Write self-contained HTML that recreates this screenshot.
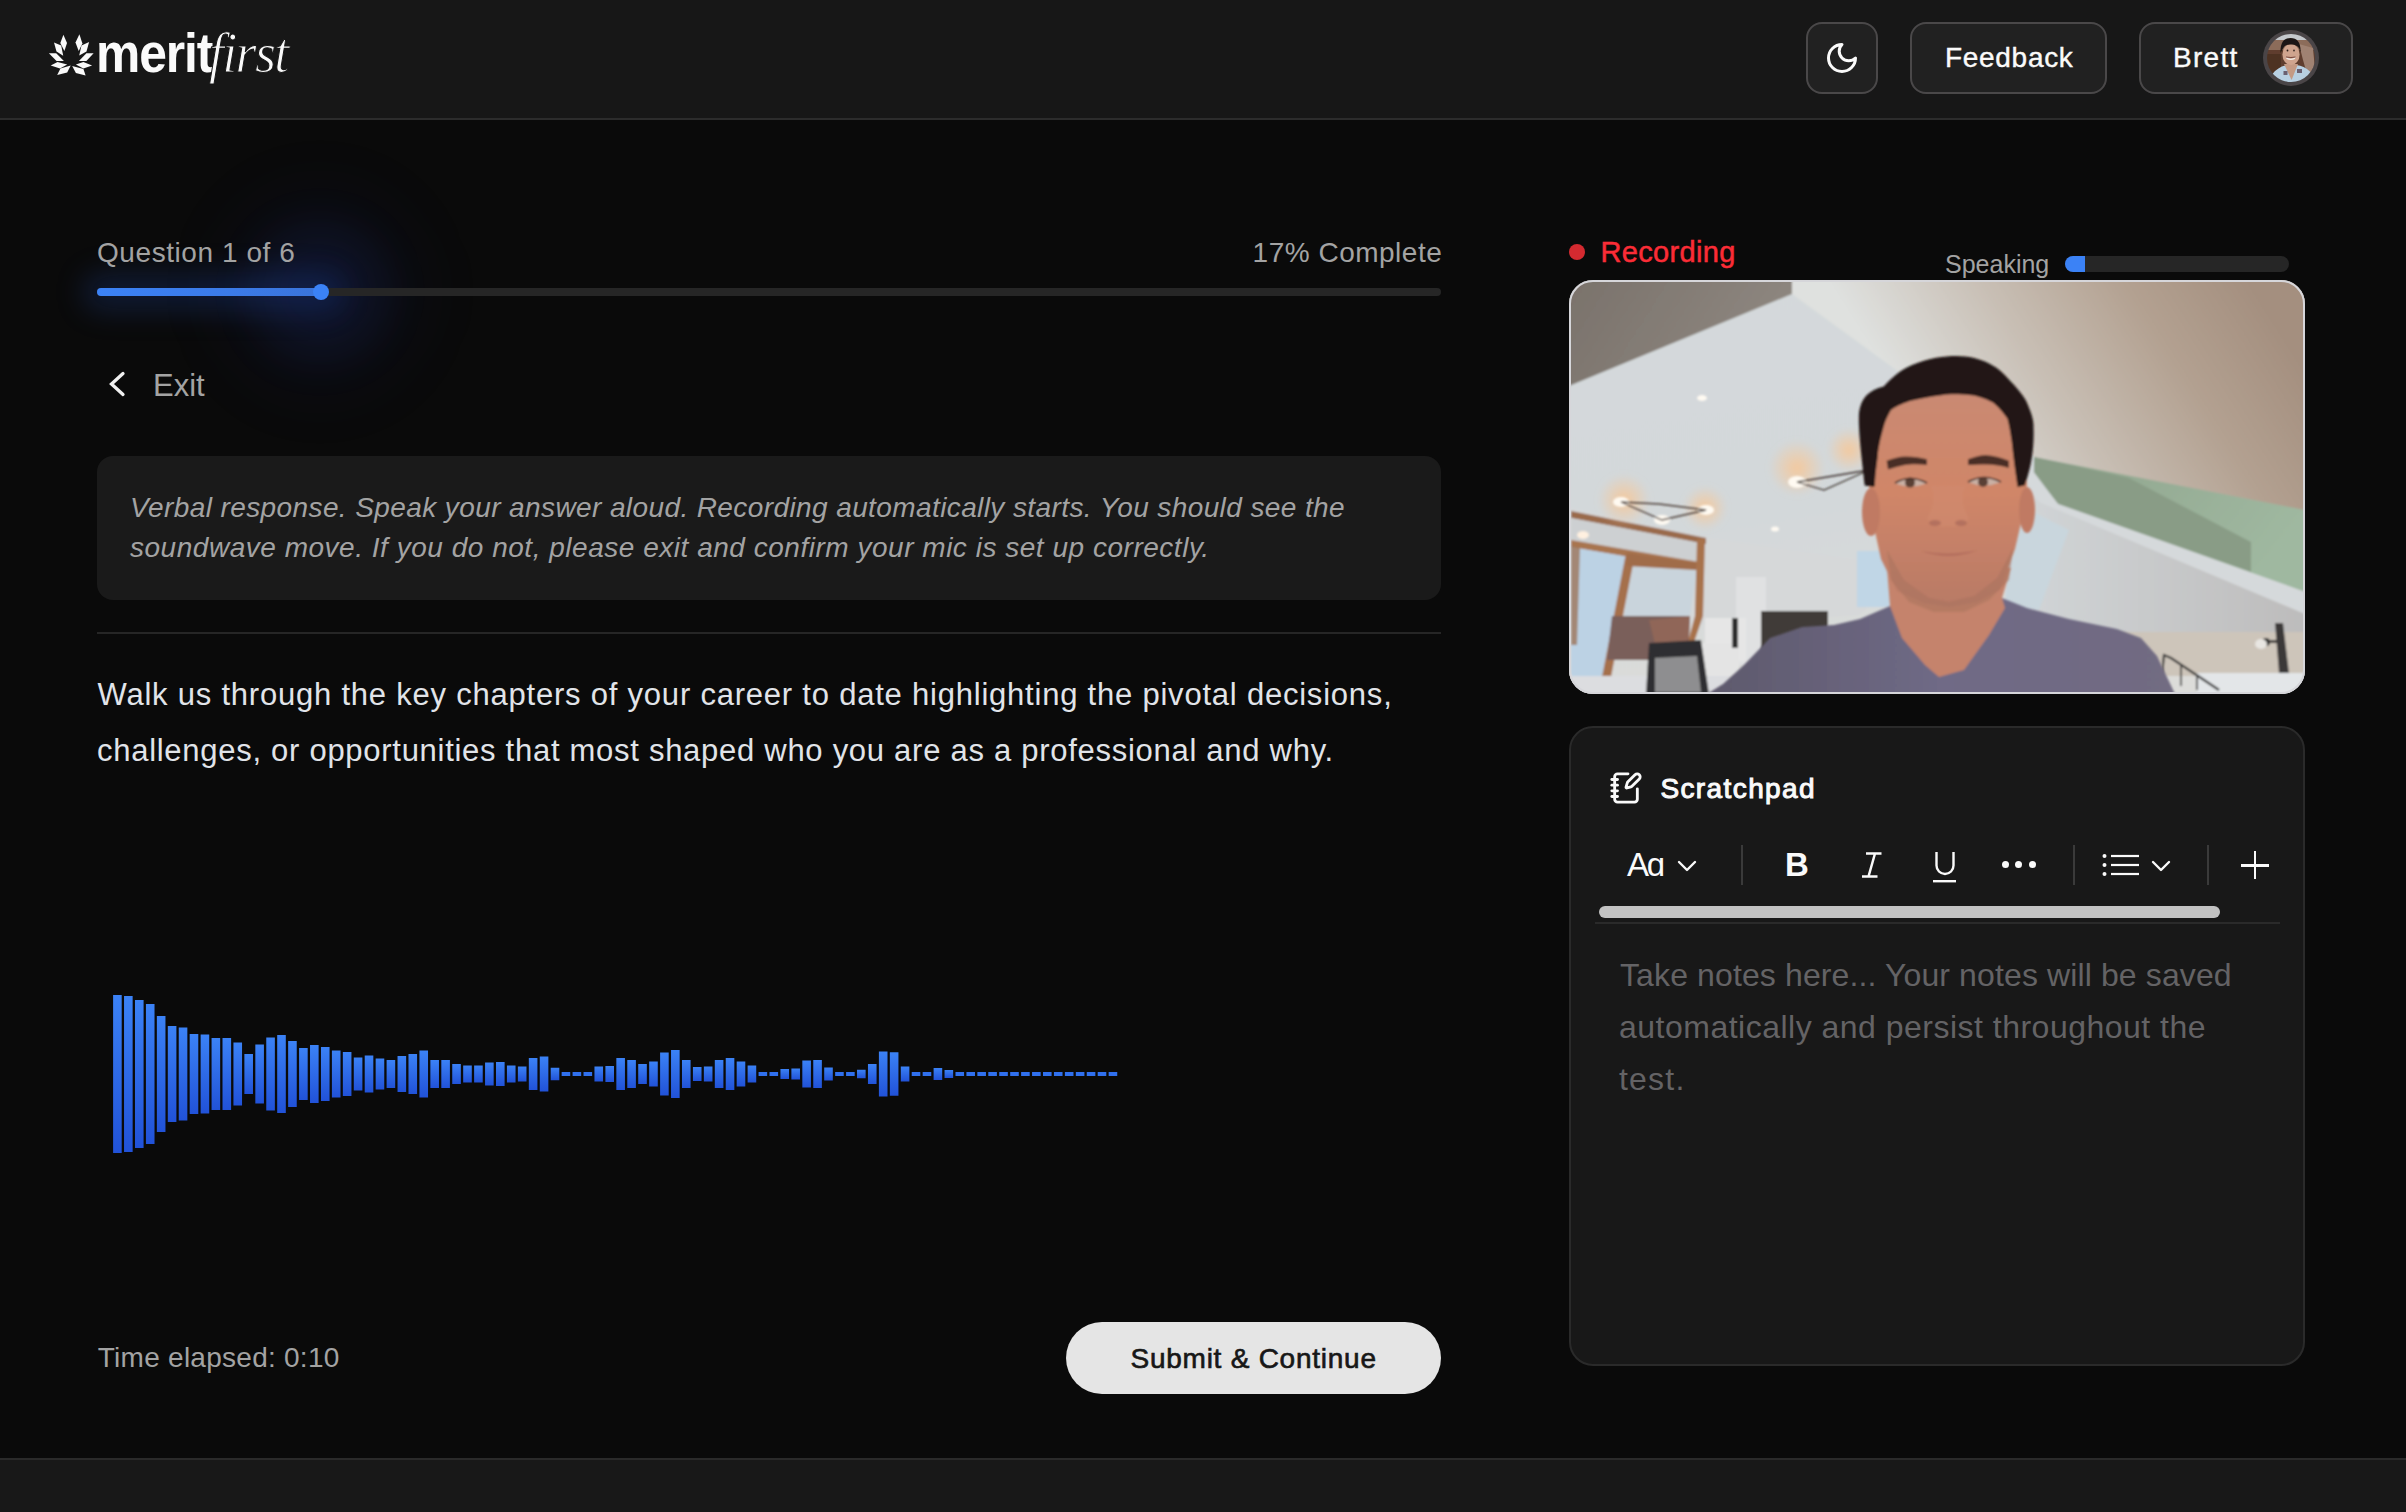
<!DOCTYPE html><html><head><meta charset="utf-8"><style>html,body{margin:0;padding:0;width:2406px;height:1512px;overflow:hidden;background:#0a0a0a;position:relative}</style></head><body><div style="position:absolute;left:0px;top:0px;width:2406px;height:118px;background:#171717"></div>
<div style="position:absolute;left:0px;top:118px;width:2406px;height:2px;background:#2c2c2c"></div>
<div style="position:absolute;left:0px;top:1458px;width:2406px;height:2px;background:#2a2a2a"></div>
<div style="position:absolute;left:0px;top:1460px;width:2406px;height:52px;background:#181818"></div>
<svg style="position:absolute;left:0;top:0" width="120" height="100" viewBox="0 0 120 100"><polygon fill="#fafafa" points="63.4,34.7 67.0,43.0 64.4,50.9 60.3,43.0"/><polygon fill="#fafafa" points="79.4,34.2 82.4,43.5 78.7,50.9 75.5,42.5"/><polygon fill="#fafafa" points="54.0,42.5 61.2,45.6 63.2,55.7 56.5,51.5"/><polygon fill="#fafafa" points="89.1,42.0 86.5,51.5 79.2,55.4 81.5,45.5"/><polygon fill="#fafafa" points="48.9,53.2 56.2,53.2 63.9,60.9 56.5,60.9"/><polygon fill="#fafafa" points="93.6,53.2 86.4,53.2 78.9,60.9 86.4,60.9"/><polygon fill="#fafafa" points="50.7,65.6 57.5,61.9 67.2,64.4 60.0,68.4"/><polygon fill="#fafafa" points="92.1,65.4 83.4,61.9 75.9,64.4 83.4,68.4"/><polygon fill="#fafafa" points="57.2,74.9 60.4,68.4 70.7,65.6 67.2,72.4"/><polygon fill="#fafafa" points="85.6,75.6 75.9,72.9 72.2,65.9 83.4,68.9"/></svg>
<div style="position:absolute;left:95.90px;top:25.84px;font-family:'Liberation Sans', sans-serif;font-size:55px;line-height:55px;font-weight:700;font-style:normal;letter-spacing:-1.2px;color:#fafafa;white-space:nowrap;transform:scaleX(0.905);transform-origin:0 0">merit</div>
<div style="position:absolute;left:209.00px;top:23.83px;font-family:'Liberation Serif', serif;font-size:58px;line-height:58px;font-weight:400;font-style:italic;letter-spacing:-1.8px;color:#fafafa;white-space:nowrap;-webkit-text-stroke:1.1px #171717;transform:scaleX(0.93);transform-origin:0 0">first</div>
<div style="position:absolute;left:1806px;top:22px;width:72px;height:72px;background:#212121;border:2px solid #4a4849;box-sizing:border-box;border-radius:16px"></div>
<svg style="position:absolute;left:1824px;top:40px" width="36" height="36" viewBox="0 0 24 24" fill="none" stroke="#fafafa" stroke-width="2" stroke-linecap="round" stroke-linejoin="round"><path d="M12 3a6 6 0 0 0 9 9 9 9 0 1 1-9-9Z"/></svg>
<div style="position:absolute;left:1910px;top:22px;width:197px;height:72px;background:#212121;border:2px solid #4a4849;box-sizing:border-box;border-radius:16px"></div>
<div style="position:absolute;left:1945.00px;top:44.30px;font-family:'Liberation Sans', sans-serif;font-size:28px;line-height:28px;font-weight:400;font-style:normal;letter-spacing:0.7px;color:#fafafa;white-space:nowrap;-webkit-text-stroke:0.4px #fafafa">Feedback</div>
<div style="position:absolute;left:2139px;top:22px;width:214px;height:72px;background:#212121;border:2px solid #4a4849;box-sizing:border-box;border-radius:16px"></div>
<div style="position:absolute;left:2173.00px;top:44.30px;font-family:'Liberation Sans', sans-serif;font-size:28px;line-height:28px;font-weight:400;font-style:normal;letter-spacing:1.3px;color:#fafafa;white-space:nowrap;-webkit-text-stroke:0.4px #fafafa">Brett</div>
<div style="position:absolute;left:2263px;top:30px;width:56px;height:56px;border-radius:50%;background:#4a4547;overflow:hidden">
<svg width="56" height="56" viewBox="0 0 56 56" style="position:absolute;left:0;top:0">
<defs><clipPath id="avc"><circle cx="28" cy="28" r="24"/></clipPath><filter id="avb"><feGaussianBlur stdDeviation="0.5"/></filter></defs>
<g clip-path="url(#avc)" filter="url(#avb)">
<rect x="0" y="0" width="56" height="56" fill="#5e3e2e"/>
<rect x="0" y="0" width="56" height="20" fill="#8c6c5a"/>
<rect x="10" y="0" width="36" height="10" fill="#c4c8cc"/>
<polygon points="36,14 50,18 52,40 44,44 40,30" fill="#a08272"/>
<rect x="4" y="24" width="14" height="22" fill="#4e3022"/>
<path d="M6 48 L12 41 Q20 34 27 35 Q36 34 44 39 L52 46 L52 56 L6 56 Z" fill="#b8d0e2"/>
<path d="M21 34 L28.6 50 L35 34 Z" fill="#c49a84"/>
<rect x="20.5" y="41" width="4" height="4" fill="#6a6070"/>
<rect x="34" y="39" width="5" height="4" fill="#6a6070"/>
<ellipse cx="28" cy="24.5" rx="8.6" ry="10.5" fill="#cfa48e"/>
<path d="M17.5 23 Q17 8 27.5 8 Q38 8 37.5 22 L36 18 Q33 14 28 14.5 Q22 14 20 18.5 Z" fill="#1e1612"/>
<path d="M23 27 Q28 30.5 32.5 27 L32 29 Q28 31 23.5 29 Z" fill="#f2ede8"/>
<path d="M23 27 Q28 28 32.5 27" stroke="#5a2a22" stroke-width="0.8" fill="none"/>
<circle cx="24.5" cy="20.5" r="0.9" fill="#2a1a14"/>
<circle cx="31" cy="20.5" r="0.9" fill="#3a2a24"/>
</g></svg></div>
<div style="position:absolute;left:215px;top:187px;width:210px;height:210px;border-radius:50%;background:rgba(30,60,190,0.05);filter:blur(30px)"></div>
<div style="position:absolute;left:255px;top:227px;width:130px;height:130px;border-radius:50%;background:rgba(35,80,220,0.10);filter:blur(22px)"></div>
<div style="position:absolute;left:82px;top:272px;width:262px;height:40px;border-radius:20px;background:rgba(40,100,240,0.17);filter:blur(14px)"></div>
<div style="position:absolute;left:97.00px;top:238.60px;font-family:'Liberation Sans', sans-serif;font-size:28px;line-height:28px;font-weight:400;font-style:normal;letter-spacing:0.57px;color:#a3a3a3;white-space:nowrap;">Question 1 of 6</div>
<div style="position:absolute;left:1252.60px;top:238.80px;font-family:'Liberation Sans', sans-serif;font-size:28px;line-height:28px;font-weight:400;font-style:normal;letter-spacing:0.5px;color:#a3a3a3;white-space:nowrap;">17% Complete</div>
<div style="position:absolute;left:97px;top:288px;width:1344px;height:8px;background:#262626;border-radius:4px"></div>
<div style="position:absolute;left:97px;top:288px;width:226px;height:8px;background:linear-gradient(90deg,#3b82f6,#3b7be8 60%,#3a74da);border-radius:4px 0 0 4px"></div>
<div style="position:absolute;left:313px;top:284px;width:16px;height:16px;background:#3b82f6;border-radius:50%"></div>
<svg style="position:absolute;left:100px;top:366px" width="36" height="36" viewBox="0 0 36 36" fill="none" stroke="#f0f0f0" stroke-width="3.3" stroke-linecap="round" stroke-linejoin="miter"><path d="M23 7.5 L11.5 18 L23 28.5"/></svg>
<div style="position:absolute;left:153.00px;top:370.16px;font-family:'Liberation Sans', sans-serif;font-size:31px;line-height:31px;font-weight:400;font-style:normal;letter-spacing:0px;color:#a3a3a3;white-space:nowrap;">Exit</div>
<div style="position:absolute;left:97px;top:456px;width:1344px;height:144px;background:#1a1a1a;border-radius:16px"></div>
<div style="position:absolute;left:130.00px;top:494.20px;font-family:'Liberation Sans', sans-serif;font-size:28px;line-height:28px;font-weight:400;font-style:italic;letter-spacing:0.4px;color:#a3a3a3;white-space:nowrap;">Verbal response. Speak your answer aloud. Recording automatically starts. You should see the</div>
<div style="position:absolute;left:130.00px;top:534.10px;font-family:'Liberation Sans', sans-serif;font-size:28px;line-height:28px;font-weight:400;font-style:italic;letter-spacing:0.52px;color:#a3a3a3;white-space:nowrap;">soundwave move. If you do not, please exit and confirm your mic is set up correctly.</div>
<div style="position:absolute;left:97px;top:632px;width:1344px;height:2px;background:#262626"></div>
<div style="position:absolute;left:97.50px;top:679.06px;font-family:'Liberation Sans', sans-serif;font-size:31px;line-height:31px;font-weight:400;font-style:normal;letter-spacing:0.78px;color:#e1e4e9;white-space:nowrap;">Walk us through the key chapters of your career to date highlighting the pivotal decisions,</div>
<div style="position:absolute;left:97.00px;top:735.26px;font-family:'Liberation Sans', sans-serif;font-size:31px;line-height:31px;font-weight:400;font-style:normal;letter-spacing:0.72px;color:#e1e4e9;white-space:nowrap;">challenges, or opportunities that most shaped who you are as a professional and why.</div>
<svg style="position:absolute;left:0;top:0" width="1200" height="1200" viewBox="0 0 1200 1200"><defs><linearGradient id="bg" x1="0" y1="0" x2="0" y2="1"><stop offset="0" stop-color="#3b82f6"/><stop offset="1" stop-color="#2152d8"/></linearGradient></defs><rect x="113.10" y="995.00" width="8.6" height="158.0" fill="url(#bg)"/><rect x="124.04" y="996.00" width="8.6" height="156.0" fill="url(#bg)"/><rect x="134.98" y="1000.00" width="8.6" height="148.0" fill="url(#bg)"/><rect x="145.92" y="1004.00" width="8.6" height="140.0" fill="url(#bg)"/><rect x="156.86" y="1016.00" width="8.6" height="116.0" fill="url(#bg)"/><rect x="167.80" y="1026.00" width="8.6" height="96.0" fill="url(#bg)"/><rect x="178.74" y="1027.50" width="8.6" height="93.0" fill="url(#bg)"/><rect x="189.68" y="1034.00" width="8.6" height="80.0" fill="url(#bg)"/><rect x="200.62" y="1034.50" width="8.6" height="79.0" fill="url(#bg)"/><rect x="211.56" y="1038.00" width="8.6" height="72.0" fill="url(#bg)"/><rect x="222.50" y="1038.00" width="8.6" height="72.0" fill="url(#bg)"/><rect x="233.44" y="1042.50" width="8.6" height="63.0" fill="url(#bg)"/><rect x="244.38" y="1054.00" width="8.6" height="40.0" fill="url(#bg)"/><rect x="255.32" y="1044.50" width="8.6" height="59.0" fill="url(#bg)"/><rect x="266.26" y="1037.50" width="8.6" height="73.0" fill="url(#bg)"/><rect x="277.20" y="1035.00" width="8.6" height="78.0" fill="url(#bg)"/><rect x="288.14" y="1041.00" width="8.6" height="66.0" fill="url(#bg)"/><rect x="299.08" y="1048.00" width="8.6" height="52.0" fill="url(#bg)"/><rect x="310.02" y="1045.00" width="8.6" height="58.0" fill="url(#bg)"/><rect x="320.96" y="1047.00" width="8.6" height="54.0" fill="url(#bg)"/><rect x="331.90" y="1050.50" width="8.6" height="47.0" fill="url(#bg)"/><rect x="342.84" y="1052.00" width="8.6" height="44.0" fill="url(#bg)"/><rect x="353.78" y="1057.50" width="8.6" height="33.0" fill="url(#bg)"/><rect x="364.72" y="1055.50" width="8.6" height="37.0" fill="url(#bg)"/><rect x="375.66" y="1058.50" width="8.6" height="31.0" fill="url(#bg)"/><rect x="386.60" y="1060.00" width="8.6" height="28.0" fill="url(#bg)"/><rect x="397.54" y="1056.00" width="8.6" height="36.0" fill="url(#bg)"/><rect x="408.48" y="1054.00" width="8.6" height="40.0" fill="url(#bg)"/><rect x="419.42" y="1050.50" width="8.6" height="47.0" fill="url(#bg)"/><rect x="430.36" y="1060.00" width="8.6" height="28.0" fill="url(#bg)"/><rect x="441.30" y="1060.00" width="8.6" height="28.0" fill="url(#bg)"/><rect x="452.24" y="1064.00" width="8.6" height="20.0" fill="url(#bg)"/><rect x="463.18" y="1065.50" width="8.6" height="17.0" fill="url(#bg)"/><rect x="474.12" y="1065.50" width="8.6" height="17.0" fill="url(#bg)"/><rect x="485.06" y="1062.50" width="8.6" height="23.0" fill="url(#bg)"/><rect x="496.00" y="1062.00" width="8.6" height="24.0" fill="url(#bg)"/><rect x="506.94" y="1065.50" width="8.6" height="17.0" fill="url(#bg)"/><rect x="517.88" y="1066.50" width="8.6" height="15.0" fill="url(#bg)"/><rect x="528.82" y="1058.00" width="8.6" height="32.0" fill="url(#bg)"/><rect x="539.76" y="1056.50" width="8.6" height="35.0" fill="url(#bg)"/><rect x="550.70" y="1067.75" width="8.6" height="12.5" fill="url(#bg)"/><rect x="561.64" y="1072.00" width="8.6" height="4.0" fill="#3070ee"/><rect x="572.58" y="1072.00" width="8.6" height="4.0" fill="#3070ee"/><rect x="583.52" y="1072.00" width="8.6" height="4.0" fill="#3070ee"/><rect x="594.46" y="1066.50" width="8.6" height="15.0" fill="url(#bg)"/><rect x="605.40" y="1066.00" width="8.6" height="16.0" fill="url(#bg)"/><rect x="616.34" y="1058.00" width="8.6" height="32.0" fill="url(#bg)"/><rect x="627.28" y="1060.00" width="8.6" height="28.0" fill="url(#bg)"/><rect x="638.22" y="1064.00" width="8.6" height="20.0" fill="url(#bg)"/><rect x="649.16" y="1061.50" width="8.6" height="25.0" fill="url(#bg)"/><rect x="660.10" y="1052.50" width="8.6" height="43.0" fill="url(#bg)"/><rect x="671.04" y="1050.00" width="8.6" height="48.0" fill="url(#bg)"/><rect x="681.98" y="1060.00" width="8.6" height="28.0" fill="url(#bg)"/><rect x="692.92" y="1067.00" width="8.6" height="14.0" fill="url(#bg)"/><rect x="703.86" y="1066.50" width="8.6" height="15.0" fill="url(#bg)"/><rect x="714.80" y="1060.00" width="8.6" height="28.0" fill="url(#bg)"/><rect x="725.74" y="1058.00" width="8.6" height="32.0" fill="url(#bg)"/><rect x="736.68" y="1061.50" width="8.6" height="25.0" fill="url(#bg)"/><rect x="747.62" y="1065.50" width="8.6" height="17.0" fill="url(#bg)"/><rect x="758.56" y="1072.00" width="8.6" height="4.0" fill="#3070ee"/><rect x="769.50" y="1072.00" width="8.6" height="4.0" fill="#3070ee"/><rect x="780.44" y="1069.00" width="8.6" height="10.0" fill="url(#bg)"/><rect x="791.38" y="1068.50" width="8.6" height="11.0" fill="url(#bg)"/><rect x="802.32" y="1060.50" width="8.6" height="27.0" fill="url(#bg)"/><rect x="813.26" y="1060.00" width="8.6" height="28.0" fill="url(#bg)"/><rect x="824.20" y="1067.50" width="8.6" height="13.0" fill="url(#bg)"/><rect x="835.14" y="1072.00" width="8.6" height="4.0" fill="#3070ee"/><rect x="846.08" y="1072.00" width="8.6" height="4.0" fill="#3070ee"/><rect x="857.02" y="1069.75" width="8.6" height="8.5" fill="url(#bg)"/><rect x="867.96" y="1064.00" width="8.6" height="20.0" fill="url(#bg)"/><rect x="878.90" y="1051.50" width="8.6" height="45.0" fill="url(#bg)"/><rect x="889.84" y="1052.25" width="8.6" height="43.5" fill="url(#bg)"/><rect x="900.78" y="1066.50" width="8.6" height="15.0" fill="url(#bg)"/><rect x="911.72" y="1072.00" width="8.6" height="4.0" fill="#3070ee"/><rect x="922.66" y="1072.00" width="8.6" height="4.0" fill="#3070ee"/><rect x="933.60" y="1068.00" width="8.6" height="12.0" fill="url(#bg)"/><rect x="944.54" y="1070.00" width="8.6" height="8.0" fill="url(#bg)"/><rect x="955.48" y="1072.00" width="8.6" height="4.0" fill="#3070ee"/><rect x="966.42" y="1072.00" width="8.6" height="4.0" fill="#3070ee"/><rect x="977.36" y="1072.00" width="8.6" height="4.0" fill="#3070ee"/><rect x="988.30" y="1072.00" width="8.6" height="4.0" fill="#3070ee"/><rect x="999.24" y="1072.00" width="8.6" height="4.0" fill="#3070ee"/><rect x="1010.18" y="1072.00" width="8.6" height="4.0" fill="#3070ee"/><rect x="1021.12" y="1072.00" width="8.6" height="4.0" fill="#3070ee"/><rect x="1032.06" y="1072.00" width="8.6" height="4.0" fill="#3070ee"/><rect x="1043.00" y="1072.00" width="8.6" height="4.0" fill="#3070ee"/><rect x="1053.94" y="1072.00" width="8.6" height="4.0" fill="#3070ee"/><rect x="1064.88" y="1072.00" width="8.6" height="4.0" fill="#3070ee"/><rect x="1075.82" y="1072.00" width="8.6" height="4.0" fill="#3070ee"/><rect x="1086.76" y="1072.00" width="8.6" height="4.0" fill="#3070ee"/><rect x="1097.70" y="1072.00" width="8.6" height="4.0" fill="#3070ee"/><rect x="1108.64" y="1072.00" width="8.6" height="4.0" fill="#3070ee"/></svg>
<div style="position:absolute;left:97.80px;top:1344.20px;font-family:'Liberation Sans', sans-serif;font-size:28px;line-height:28px;font-weight:400;font-style:normal;letter-spacing:0.26px;color:#a3a3a3;white-space:nowrap;">Time elapsed: 0:10</div>
<div style="position:absolute;left:1066px;top:1322px;width:375px;height:72px;background:#e5e5e5;border-radius:36px"></div>
<div style="position:absolute;left:1130.50px;top:1344.60px;font-family:'Liberation Sans', sans-serif;font-size:28px;line-height:28px;font-weight:400;font-style:normal;letter-spacing:0.75px;color:#171717;white-space:nowrap;-webkit-text-stroke:0.65px #171717">Submit &amp; Continue</div>
<div style="position:absolute;left:1569px;top:244px;width:16px;height:16px;background:#d42a30;border-radius:50%"></div>
<div style="position:absolute;left:1600.50px;top:238.05px;font-family:'Liberation Sans', sans-serif;font-size:29px;line-height:29px;font-weight:400;font-style:normal;letter-spacing:0.33px;color:#fb2c36;white-space:nowrap;-webkit-text-stroke:0.5px #fb2c36">Recording</div>
<div style="position:absolute;left:1945.00px;top:252.04px;font-family:'Liberation Sans', sans-serif;font-size:25px;line-height:25px;font-weight:400;font-style:normal;letter-spacing:0px;color:#a3a3a3;white-space:nowrap;">Speaking</div>
<div style="position:absolute;left:2065px;top:256px;width:224px;height:16px;background:#262626;border-radius:8px"></div>
<div style="position:absolute;left:2065px;top:256px;width:20px;height:16px;background:#3b82f6;border-radius:8px 0 0 8px"></div>
<div id="video" style="position:absolute;left:1569px;top:280px;width:736px;height:414px;border-radius:24px;overflow:hidden;background:#cfd3d4"><svg width="736" height="414" viewBox="0 0 736 414" style="position:absolute;left:0;top:0">
<defs>
<linearGradient id="vdark" x1="0" y1="0" x2="1" y2="0.3"><stop offset="0" stop-color="#7a726b"/><stop offset="1" stop-color="#8e8780"/></linearGradient>
<linearGradient id="vceil" x1="0" y1="0" x2="0.3" y2="1"><stop offset="0" stop-color="#d4d9db"/><stop offset="0.6" stop-color="#d3d8da"/><stop offset="1" stop-color="#dcdcd9"/></linearGradient>
<linearGradient id="vright" gradientUnits="userSpaceOnUse" x1="380" y1="190" x2="680" y2="0"><stop offset="0" stop-color="#dfe1df"/><stop offset="0.35" stop-color="#c9c0b6"/><stop offset="0.7" stop-color="#b3a191"/><stop offset="1" stop-color="#a48f7f"/></linearGradient>
<linearGradient id="vgreen" x1="0" y1="0" x2="1" y2="0.4"><stop offset="0" stop-color="#8fa38c"/><stop offset="1" stop-color="#9fb8a0"/></linearGradient>
<linearGradient id="vwall" x1="0" y1="0" x2="1" y2="0"><stop offset="0" stop-color="#d2d6d8"/><stop offset="1" stop-color="#bdbcbc"/></linearGradient>
<radialGradient id="vglow"><stop offset="0" stop-color="#f6c89a" stop-opacity="0.95"/><stop offset="1" stop-color="#f6c89a" stop-opacity="0"/></radialGradient>
<radialGradient id="vbulb"><stop offset="0" stop-color="#ffffff"/><stop offset="0.6" stop-color="#fff6e8"/><stop offset="1" stop-color="#fff6e8" stop-opacity="0"/></radialGradient>
<linearGradient id="vskin" x1="0" y1="0" x2="0" y2="1"><stop offset="0" stop-color="#c98a74"/><stop offset="0.5" stop-color="#d08668"/><stop offset="1" stop-color="#b87a66"/></linearGradient>
<linearGradient id="vshirt" x1="0" y1="0" x2="1" y2="0"><stop offset="0" stop-color="#5e596c"/><stop offset="0.5" stop-color="#6f6a86"/><stop offset="1" stop-color="#726c82"/></linearGradient>
<filter id="vblur" x="-5%" y="-5%" width="110%" height="110%"><feGaussianBlur stdDeviation="1.3"/></filter>
<filter id="vblur2" x="-50%" y="-50%" width="200%" height="200%"><feGaussianBlur stdDeviation="3"/></filter>
</defs>
<g filter="url(#vblur)">
<rect x="0" y="0" width="736" height="414" fill="url(#vceil)"/>
<polygon points="0,0 223,0 223,14 0,106" fill="url(#vdark)"/>
<polygon points="223,0 736,0 736,232 465,177 330,92 223,14" fill="url(#vright)"/>

<!-- green band -->
<polygon points="465,177 736,230 736,312 489,224 465,192" fill="url(#vgreen)"/>
<polygon points="465,177 560,198 682,262 682,292 489,224 465,192" fill="#899c86"/>
<!-- white beam -->
<polygon points="462,190 489,224 736,312 736,334 470,222 455,205" fill="#d5d9db"/>
<!-- wall lower right -->
<polygon points="455,205 470,222 736,334 736,354 470,354 440,240" fill="url(#vwall)"/>
<polygon points="440,220 500,250 470,330 436,330" fill="#c9d6dd"/>
<rect x="470" y="352" width="266" height="44" fill="#cdc5ba"/>
<rect x="628" y="393" width="108" height="21" fill="#e3e6e8"/>
<polyline points="593,394 595,375 602,378 650,410" fill="none" stroke="#2e2e2e" stroke-width="2.2"/><line x1="612" y1="386" x2="612" y2="406" stroke="#2e2e2e" stroke-width="1.6"/><line x1="628" y1="396" x2="628" y2="410" stroke="#2e2e2e" stroke-width="1.6"/>
<polygon points="706,343 714,343 720,393 710,393" fill="#3a3838"/><circle cx="697" cy="362" r="4" fill="#2a2a2a"/><ellipse cx="692" cy="364" rx="6" ry="5" fill="#e8e6e2"/><rect x="700" y="360" width="10" height="3" fill="#3a3838"/>
<!-- left office -->
<polygon points="0,228 137,257 300,282 330,300 290,335 137,345 0,345" fill="#d6d8d9"/>
<polygon points="2,231 137,258 137,264 2,238" fill="#9a6a4c"/>
<polygon points="2,238 135,264 130,283 2,261" fill="#cdd0d2"/>
<polygon points="2,260 130,282 129,289 2,267" fill="#a87450"/>
<polygon points="2,267 60,277 40,397 2,397" fill="#bcd2e4"/>
<polygon points="62,286 128,290 121,336 55,336" fill="#c9d4dc"/>
<polygon points="57,273 66,274 42,397 33,397" fill="#a5704c"/>
<polygon points="58,273 128,283 127,290 58,286" fill="#a06c4a"/>
<polygon points="128,259 136,259 134,336 119,380 114,380 126,336" fill="#a8724c"/>
<polygon points="2,266 11,268 8,365 2,365" fill="#9c7458" opacity="0.8"/>
<rect x="167" y="297" width="30" height="88" fill="#e0e1e2"/>
<rect x="288" y="271" width="36" height="56" fill="#c0d6e6"/>
<polygon points="43,336 121,336 119,380 38,380" fill="#7a5e5a"/>
<polygon points="80,340 121,336 119,380 90,380" fill="#9a6a58" opacity="0.7"/>
<rect x="192" y="331" width="67" height="46" fill="#403b39"/>
<rect x="136" y="338" width="41" height="43" fill="#e6e6e6"/>
<rect x="130" y="363" width="40" height="34" fill="#e4e4e4"/>
<rect x="0" y="396" width="160" height="18" fill="#dcdde0"/>
<polygon points="80,363 132,360 140,414 77,414" fill="#2e2e30"/>
<polygon points="86,378 128,376 132,412 86,412" fill="#8e8e90"/>
<rect x="163" y="338" width="6" height="30" fill="#2d2d2d"/>
</g>
<g filter="url(#vblur2)">
<circle cx="55" cy="220" r="26" fill="url(#vglow)"/>
<circle cx="136" cy="228" r="22" fill="url(#vglow)"/>
<circle cx="228" cy="188" r="28" fill="url(#vglow)"/>
<circle cx="280" cy="170" r="22" fill="url(#vglow)"/>
</g>
<g filter="url(#vblur)">
<ellipse cx="52" cy="222" rx="8" ry="5" fill="#fffaf2"/>
<ellipse cx="93" cy="240" rx="8" ry="5" fill="#fffaf2"/>
<ellipse cx="137" cy="230" rx="8" ry="5" fill="#fffaf2"/>
<ellipse cx="228" cy="202" rx="9" ry="6" fill="#fffaf2"/>
<ellipse cx="133" cy="118" rx="5" ry="3" fill="#fffaf2"/>
<ellipse cx="206" cy="249" rx="4" ry="2.5" fill="#fffaf2"/>
<ellipse cx="14" cy="255" rx="6" ry="4" fill="#fff0e0"/>
<polyline points="52,222 93,240 137,230 90,224 52,222" fill="none" stroke="#4a3c36" stroke-width="1.3"/>
<polyline points="228,202 300,190 255,210 228,202" fill="none" stroke="#3a302c" stroke-width="1.3"/>
<!-- person -->
<polygon points="138,414 154,404 175,385 201,358 233,347 265,345 291,339 321,326 345,333 380,352 420,338 433,318 458,328 500,339 548,349 572,358 588,376 606,414" fill="url(#vshirt)"/>
<polygon points="318,288 442,288 433,318 436,328 420,355 395,390 370,397 356,385 333,358 321,326" fill="#c5836c"/>
<polygon points="300,205 305,247 312,279 328,311 355,323 380,327 408,322 431,310 446,269 455,230 458,205 452,140 440,110 380,100 318,110 306,140" fill="url(#vskin)"/>
<polygon points="318,270 335,300 360,318 380,322 405,316 428,298 444,268 440,300 420,320 395,332 365,332 340,322 322,300" fill="#a8725f" opacity="0.55"/>
<ellipse cx="302" cy="232" rx="9" ry="24" fill="#c07a64"/>
<ellipse cx="458" cy="230" rx="8" ry="23" fill="#c07a64"/>
<path d="M304.5,207 L295.7,205.5 C293,180 289,150 290,132.7 C292,118 300,110 314.6,106.6 C325,95 335,88 343.7,84.7 C360,78 375,76 387.4,76 C400,76 410,79 416.5,81.8 C428,87 433,92 438.3,97.8 C448,108 454,115 457.2,121 C462,132 465,140 464.5,147.3 C465,160 464,170 463,176.4 C461,190 458,198 455.8,205.5 L448.5,207 C446,190 444,175 442.7,161.8 C441,150 440,145 438.3,138.6 C432,130 428,126 423.8,122.6 C415,118 408,116 402,115.3 C390,114 380,114 372.8,115.3 C360,117 350,119 341,121 C332,124 326,127 322,130 C318,137 316,142 314.6,147.3 C311,160 309,170 308.8,176.4 C307,190 306,198 306,205.5 Z" fill="#231814"/>
<path d="M317.6,180.8 C325,178 330,176.5 336.5,176.4 C345,176.5 352,177.5 358,179.3 L358,185 C350,184 342,184 336,185 C330,186 325,188 319,189.5 Z" fill="#4a2e26"/>
<path d="M399,179.3 C405,177 410,175.5 416.5,175 C425,175.5 433,178 439.8,180.8 L439.8,188 C433,186 425,184.5 417,184.5 C410,184.5 404,185 399,185 Z" fill="#4a2e26"/>
<path d="M326,203 Q341,195 358,203 Q341,210 326,203 Z" fill="#c9b0a4"/>
<path d="M399,202 Q415,194 432,202 Q415,209 399,202 Z" fill="#c9b0a4"/>
<circle cx="341" cy="202.6" r="5" fill="#5a4036"/>
<circle cx="414" cy="202" r="5" fill="#5a4036"/>
<path d="M326,203 Q341,194 358,203" stroke="#3a2620" stroke-width="1.6" fill="none"/>
<path d="M399,202 Q415,193 432,202" stroke="#3a2620" stroke-width="1.6" fill="none"/>
<path d="M362,206 C366,218 364,228 358,238 C362,246 372,248 379,246 C386,248 396,246 400,238 C394,228 392,218 396,206" fill="#d08a70" opacity="0.6"/>
<ellipse cx="366" cy="243" rx="6" ry="3" fill="#a86858" opacity="0.7"/>
<ellipse cx="392" cy="243" rx="6" ry="3" fill="#a86858" opacity="0.7"/>
<path d="M352,271 Q380,277 409,270 Q381,281 352,271 Z" fill="#b06a5c"/>
</g>
</svg>
</div>
<div style="position:absolute;left:1569px;top:280px;width:736px;height:414px;border:2px solid #d6d6da;box-sizing:border-box;border-radius:24px"></div>
<div style="position:absolute;left:1569px;top:726px;width:736px;height:640px;background:#181818;border:2px solid #2a2a2a;box-sizing:border-box;border-radius:24px"></div>
<svg style="position:absolute;left:1609px;top:771px" width="34" height="34" viewBox="0 0 24 24" fill="none" stroke="#fafafa" stroke-width="2" stroke-linecap="round" stroke-linejoin="round"><path d="M13.4 2H6a2 2 0 0 0-2 2v16a2 2 0 0 0 2 2h12a2 2 0 0 0 2-2v-7.4"/><path d="M2 6h4"/><path d="M2 10h4"/><path d="M2 14h4"/><path d="M2 18h4"/><path d="M21.378 5.626a1 1 0 1 0-3.004-3.004l-5.01 5.012a2 2 0 0 0-.506.854l-.837 2.87a.5.5 0 0 0 .62.62l2.87-.837a2 2 0 0 0 .854-.506z"/></svg>
<div style="position:absolute;left:1660.40px;top:774.60px;font-family:'Liberation Sans', sans-serif;font-size:28px;line-height:28px;font-weight:400;font-style:normal;letter-spacing:1.4px;color:#fafafa;white-space:nowrap;-webkit-text-stroke:1.0px #fafafa">Scratchpad</div>
<div style="position:absolute;left:1627.00px;top:848.37px;font-family:'Liberation Sans', sans-serif;font-size:33px;line-height:33px;font-weight:400;font-style:normal;letter-spacing:-2.2px;color:#fafafa;white-space:nowrap;">A&#x251;</div>
<svg style="position:absolute;left:1675px;top:858px" width="24" height="16" viewBox="0 0 24 16" fill="none" stroke="#fafafa" stroke-width="2.4" stroke-linecap="round" stroke-linejoin="round"><path d="M4 4 L12 12 L20 4"/></svg>
<div style="position:absolute;left:1741px;top:845px;width:2px;height:40px;background:#3a3a3a"></div>
<div style="position:absolute;left:1785.00px;top:848.37px;font-family:'Liberation Sans', sans-serif;font-size:33px;line-height:33px;font-weight:700;font-style:normal;letter-spacing:0px;color:#fafafa;white-space:nowrap;">B</div>
<svg style="position:absolute;left:1855px;top:846px" width="36" height="38" viewBox="0 0 36 38" fill="none" stroke="#fafafa" stroke-width="2.5" stroke-linecap="butt"><path d="M11 7.5 H26.5 M7 30.5 H22.5 M20 7.5 L13.5 30.5"/></svg>
<svg style="position:absolute;left:1928px;top:846px" width="34" height="40" viewBox="0 0 34 40" fill="none" stroke="#fafafa" stroke-width="2.4"><path d="M8.5 6 V19.5 a8.5 8.5 0 0 0 17 0 V6"/><path d="M5 35.2 H28"/></svg>
<div style="position:absolute;left:2001.5px;top:861px;width:7px;height:7px;background:#fafafa;border-radius:50%"></div>
<div style="position:absolute;left:2015.0px;top:861px;width:7px;height:7px;background:#fafafa;border-radius:50%"></div>
<div style="position:absolute;left:2028.5px;top:861px;width:7px;height:7px;background:#fafafa;border-radius:50%"></div>
<div style="position:absolute;left:2073px;top:845px;width:2px;height:40px;background:#3a3a3a"></div>
<svg style="position:absolute;left:2100px;top:852px" width="42" height="26" viewBox="0 0 42 26" fill="#fafafa"><circle cx="4.5" cy="4" r="2"/><circle cx="4.5" cy="13" r="2"/><circle cx="4.5" cy="22" r="2"/><rect x="11" y="2.9" width="28" height="2.2"/><rect x="11" y="11.9" width="28" height="2.2"/><rect x="11" y="20.9" width="28" height="2.2"/></svg>
<svg style="position:absolute;left:2149px;top:858px" width="24" height="16" viewBox="0 0 24 16" fill="none" stroke="#fafafa" stroke-width="2.4" stroke-linecap="round" stroke-linejoin="round"><path d="M4 4 L12 12 L20 4"/></svg>
<div style="position:absolute;left:2207px;top:845px;width:2px;height:40px;background:#3a3a3a"></div>
<div style="position:absolute;left:2241px;top:864px;width:28px;height:2.6px;background:#fafafa"></div>
<div style="position:absolute;left:2253.7px;top:851px;width:2.6px;height:28px;background:#fafafa"></div>
<div style="position:absolute;left:1599px;top:906px;width:621px;height:12px;background:#c2c2c2;border-radius:6px"></div>
<div style="position:absolute;left:1595px;top:922px;width:685px;height:2px;background:#2a2a2a"></div>
<div style="position:absolute;left:1620.00px;top:959.21px;font-family:'Liberation Sans', sans-serif;font-size:32px;line-height:32px;font-weight:400;font-style:normal;letter-spacing:0.12px;color:#646365;white-space:nowrap;">Take notes here... Your notes will be saved</div>
<div style="position:absolute;left:1619.00px;top:1011.31px;font-family:'Liberation Sans', sans-serif;font-size:32px;line-height:32px;font-weight:400;font-style:normal;letter-spacing:0.49px;color:#646365;white-space:nowrap;">automatically and persist throughout the</div>
<div style="position:absolute;left:1619.00px;top:1062.91px;font-family:'Liberation Sans', sans-serif;font-size:32px;line-height:32px;font-weight:400;font-style:normal;letter-spacing:1.2px;color:#646365;white-space:nowrap;">test.</div></body></html>
